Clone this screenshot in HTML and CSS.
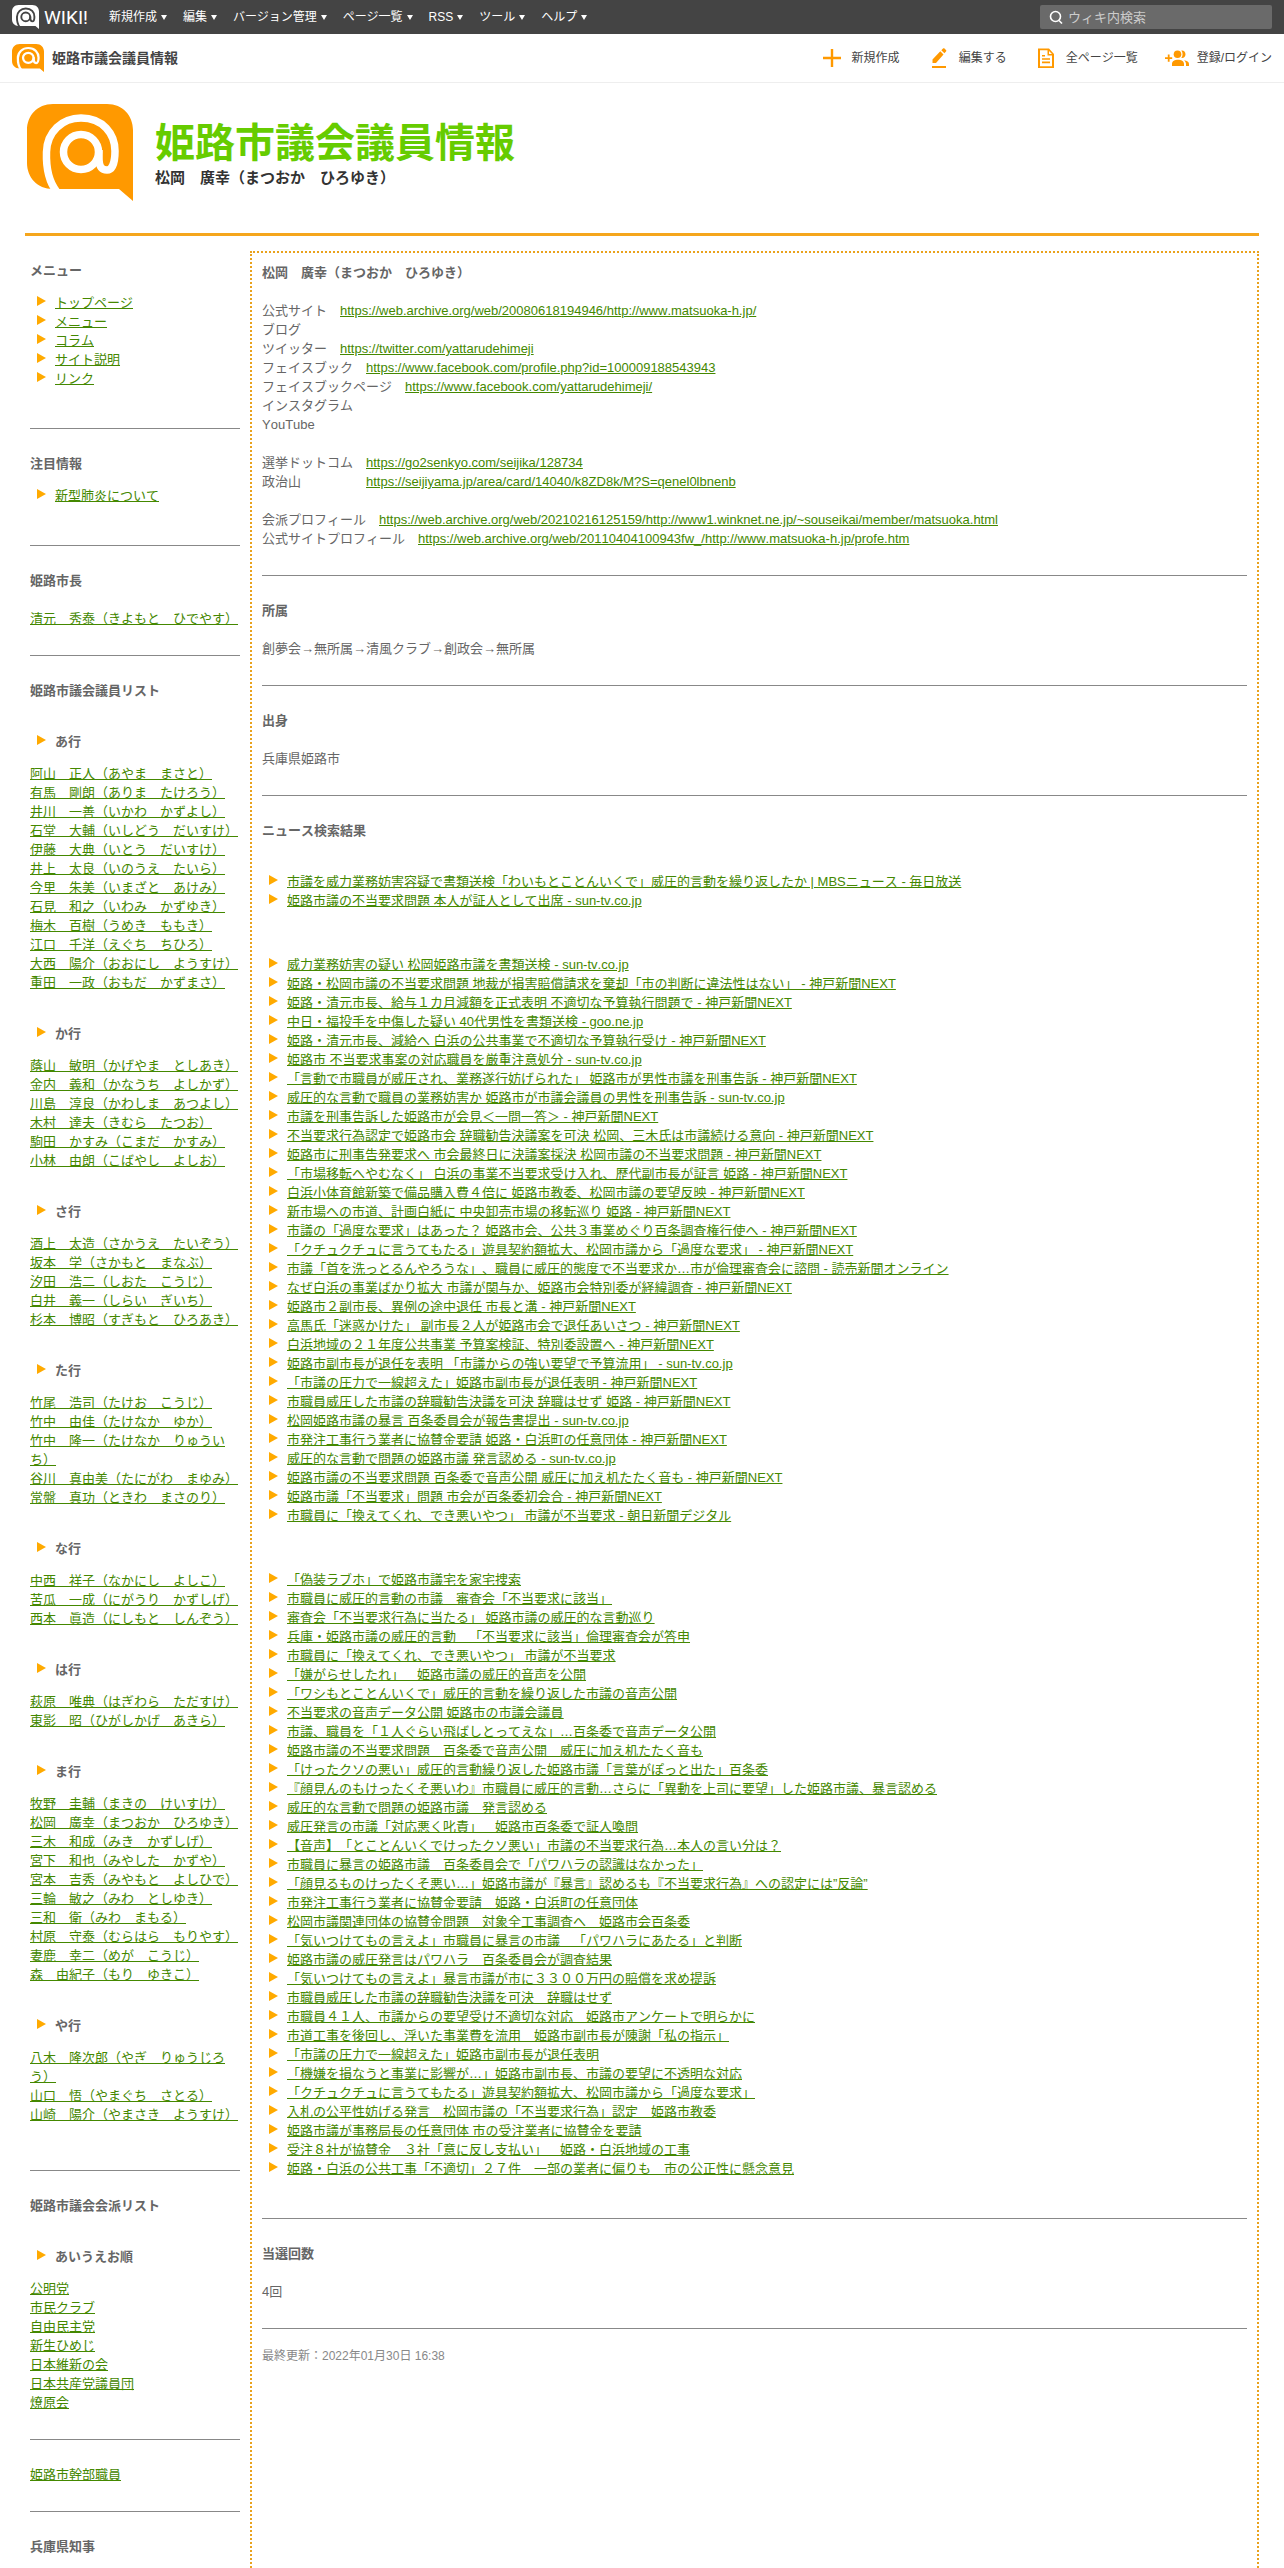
FILE: index.html
```html
<!DOCTYPE html>
<html lang="ja">
<head>
    <meta charset="UTF-8">
    <meta name="viewport" content="width=device-width, initial-scale=1.0">
    <title>松岡　廣幸（まつおか　ひろゆき） - 姫路市議会議員情報</title>
    <link rel="stylesheet" href="styles.css">
</head>
<body>
    <!-- shared logo mark -->
    <svg class="defs" width="0" height="0" aria-hidden="true">
        <symbol id="mark" viewBox="0 0 106 97" preserveAspectRatio="none">
            <path fill="currentColor" d="M26 0H80C96 0 106 12 106 26V97L92 85H26C10 85 0 73 0 59V26C0 12 10 0 26 0Z"/>
            <g fill="none" stroke="var(--line)" stroke-width="7.5">
                <path d="M30 88C21 77 19 64 19.500 48C20 28 35 14 54 14C76 14 88 30 88 47C88 59 85 66 80 66C74 66 72 62 72 54V46"/>
                <circle cx="54" cy="48" r="17.500"/>
            </g>
        </symbol>
    </svg>

    <div class="topbar">
        <a class="brand" href="#"><svg class="brand-mark"><use href="#mark"/></svg><span>WIKI!</span></a>
        <nav class="menu">
            <button type="button">新規作成</button>
            <button type="button">編集</button>
            <button type="button">バージョン管理</button>
            <button type="button">ページ一覧</button>
            <button type="button">RSS</button>
            <button type="button">ツール</button>
            <button type="button">ヘルプ</button>
        </nav>
        <form class="search">
            <svg viewBox="0 0 14 14" width="14" height="14" fill="none" stroke="#fff" stroke-width="1.6"><circle cx="6.500" cy="6.500" r="5"/><path d="M10 10.500l3 3"/></svg>
            <input type="search" aria-label="ウィキ内検索" placeholder="ウィキ内検索">
        </form>
    </div>

    <div class="wikibar">
        <a class="wiki-name" href="#"><svg class="wiki-mark"><use href="#mark"/></svg>姫路市議会議員情報</a>
        <nav class="actions">
            <a href="#"><svg viewBox="0 0 24 24"><path d="M10.800 3h2.400v7.800H21v2.400h-7.800V21h-2.400v-7.800H3v-2.400h7.800z"/></svg>新規作成</a>
            <a href="#"><svg viewBox="0 0 24 24"><path d="M5 20h14v2H5zM5.500 17v-3.500l7.800-8.200 3.200 3.200L9 17zM14.300 4.300l1.700-1.800c.5-.5 1-.5 1.500 0l1.500 1.500c.5.5.5 1 0 1.500l-1.600 1.800z"/></svg>編集する</a>
            <a href="#"><svg viewBox="0 0 24 24"><path fill-rule="evenodd" d="M4 2.500h11l5 5.500v14H4zM6 4.300v15.900h12V9.500h-4.500V4.300zM15 5v3h3zM8 9h3v1.600H8zM8 12.200h8v1.600H8zM8 15.600h8v1.600H8z"/></svg>全ページ一覧</a>
            <a href="#"><svg viewBox="0 0 24 24"><path d="M2.800 8.500h1.800v2.700h2.600V13H4.600v2.700H2.800V13H0v-1.800h2.800zM7 20v-2c0-3 3-4.200 6-4.200s6 1.200 6 4.200v2z"/><circle cx="12.500" cy="8.300" r="3.800"/><path d="M16.300 4.600c2.200-.6 4.200 1.300 4.200 3.700s-2 4.300-4.200 3.700c1.700-2.200 1.700-5.200 0-7.400zM19 14.200c3 .4 5 1.600 5 3.800v2h-3v-2c0-1.600-.8-2.900-2-3.800z"/></svg>登録/ログイン</a>
        </nav>
    </div>

    <div class="container">
        <header class="header">
            <a href="#"><svg class="header-mark"><use href="#mark"/></svg></a>
            <div class="titles">
                <h1>姫路市議会議員情報</h1>
                <p>松岡　廣幸（まつおか　ひろゆき）</p>
            </div>
        </header>

        <div class="columns">
            <aside class="sidebar">
                <h2>メニュー</h2>
                <ul class="arrows">
                    <li><a href="#">トップページ</a></li>
                    <li><a href="#">メニュー</a></li>
                    <li><a href="#">コラム</a></li>
                    <li><a href="#">サイト説明</a></li>
                    <li><a href="#">リンク</a></li>
                </ul>
                <hr>
                <h2>注目情報</h2>
                <ul class="arrows">
                    <li><a href="#">新型肺炎について</a></li>
                </ul>
                <hr>
                <h2>姫路市長</h2>
                <p><a href="#">清元　秀泰（きよもと　ひでやす）</a></p>
                <hr>
                <h2>姫路市議会議員リスト</h2>
                <h3>あ行</h3>
                <ul>
                    <li><a href="#">阿山　正人（あやま　まさと）</a></li>
                    <li><a href="#">有馬　剛朗（ありま　たけろう）</a></li>
                    <li><a href="#">井川　一善（いかわ　かずよし）</a></li>
                    <li><a href="#">石堂　大輔（いしどう　だいすけ）</a></li>
                    <li><a href="#">伊藤　大典（いとう　だいすけ）</a></li>
                    <li><a href="#">井上　太良（いのうえ　たいら）</a></li>
                    <li><a href="#">今里　朱美（いまざと　あけみ）</a></li>
                    <li><a href="#">石見　和之（いわみ　かずゆき）</a></li>
                    <li><a href="#">梅木　百樹（うめき　ももき）</a></li>
                    <li><a href="#">江口　千洋（えぐち　ちひろ）</a></li>
                    <li><a href="#">大西　陽介（おおにし　ようすけ）</a></li>
                    <li><a href="#">重田　一政（おもだ　かずまさ）</a></li>
                </ul>
                <h3>か行</h3>
                <ul>
                    <li><a href="#">蔭山　敏明（かげやま　としあき）</a></li>
                    <li><a href="#">金内　義和（かなうち　よしかず）</a></li>
                    <li><a href="#">川島　淳良（かわしま　あつよし）</a></li>
                    <li><a href="#">木村　達夫（きむら　たつお）</a></li>
                    <li><a href="#">駒田　かすみ（こまだ　かすみ）</a></li>
                    <li><a href="#">小林　由朗（こばやし　よしお）</a></li>
                </ul>
                <h3>さ行</h3>
                <ul>
                    <li><a href="#">酒上　太造（さかうえ　たいぞう）</a></li>
                    <li><a href="#">坂本　学（さかもと　まなぶ）</a></li>
                    <li><a href="#">汐田　浩二（しおた　こうじ）</a></li>
                    <li><a href="#">白井　義一（しらい　ぎいち）</a></li>
                    <li><a href="#">杉本　博昭（すぎもと　ひろあき）</a></li>
                </ul>
                <h3>た行</h3>
                <ul>
                    <li><a href="#">竹尾　浩司（たけお　こうじ）</a></li>
                    <li><a href="#">竹中　由佳（たけなか　ゆか）</a></li>
                    <li><a href="#">竹中　隆一（たけなか　りゅういち）</a></li>
                    <li><a href="#">谷川　真由美（たにがわ　まゆみ）</a></li>
                    <li><a href="#">常盤　真功（ときわ　まさのり）</a></li>
                </ul>
                <h3>な行</h3>
                <ul>
                    <li><a href="#">中西　祥子（なかにし　よしこ）</a></li>
                    <li><a href="#">苦瓜　一成（にがうり　かずしげ）</a></li>
                    <li><a href="#">西本　眞造（にしもと　しんぞう）</a></li>
                </ul>
                <h3>は行</h3>
                <ul>
                    <li><a href="#">萩原　唯典（はぎわら　ただすけ）</a></li>
                    <li><a href="#">東影　昭（ひがしかげ　あきら）</a></li>
                </ul>
                <h3>ま行</h3>
                <ul>
                    <li><a href="#">牧野　圭輔（まきの　けいすけ）</a></li>
                    <li><a href="#">松岡　廣幸（まつおか　ひろゆき）</a></li>
                    <li><a href="#">三木　和成（みき　かずしげ）</a></li>
                    <li><a href="#">宮下　和也（みやした　かずや）</a></li>
                    <li><a href="#">宮本　吉秀（みやもと　よしひで）</a></li>
                    <li><a href="#">三輪　敏之（みわ　としゆき）</a></li>
                    <li><a href="#">三和　衛（みわ　まもる）</a></li>
                    <li><a href="#">村原　守泰（むらはら　もりやす）</a></li>
                    <li><a href="#">妻鹿　幸二（めが　こうじ）</a></li>
                    <li><a href="#">森　由紀子（もり　ゆきこ）</a></li>
                </ul>
                <h3>や行</h3>
                <ul class="last">
                    <li><a href="#">八木　隆次郎（やぎ　りゅうじろう）</a></li>
                    <li><a href="#">山口　悟（やまぐち　さとる）</a></li>
                    <li><a href="#">山崎　陽介（やまさき　ようすけ）</a></li>
                </ul>
                <hr>
                <h2>姫路市議会会派リスト</h2>
                <h3>あいうえお順</h3>
                <ul>
                    <li><a href="#">公明党</a></li>
                    <li><a href="#">市民クラブ</a></li>
                    <li><a href="#">自由民主党</a></li>
                    <li><a href="#">新生ひめじ</a></li>
                    <li><a href="#">日本維新の会</a></li>
                    <li><a href="#">日本共産党議員団</a></li>
                    <li><a href="#">燎原会</a></li>
                </ul>
                <hr>
                <a href="#">姫路市幹部職員</a>
                <hr>
                <h2>兵庫県知事</h2>
            </aside>

            <main class="content">
                <h2>松岡　廣幸（まつおか　ひろゆき）</h2>
                <p>
                    公式サイト　<a href="#">https://web.archive.org/web/20080618194946/http://www.matsuoka-h.jp/</a><br>
                    ブログ<br>
                    ツイッター　<a href="#">https://twitter.com/yattarudehimeji</a><br>
                    フェイスブック　<a href="#">https://www.facebook.com/profile.php?id=100009188543943</a><br>
                    フェイスブックページ　<a href="#">https://www.facebook.com/yattarudehimeji/</a><br>
                    インスタグラム<br>
                    YouTube
                </p>
                <p>
                    選挙ドットコム　<a href="#">https://go2senkyo.com/seijika/128734</a><br>
                    政治山　　　　　<a href="#">https://seijiyama.jp/area/card/14040/k8ZD8k/M?S=qenel0lbnenb</a>
                </p>
                <p>
                    会派プロフィール　<a href="#">https://web.archive.org/web/20210216125159/http://www1.winknet.ne.jp/~souseikai/member/matsuoka.html</a><br>
                    公式サイトプロフィール　<a href="#">https://web.archive.org/web/20110404100943fw_/http://www.matsuoka-h.jp/profe.htm</a>
                </p>
                <hr>
                <h2>所属</h2>
                <p>創夢会→無所属→清風クラブ→創政会→無所属</p>
                <hr>
                <h2>出身</h2>
                <p>兵庫県姫路市</p>
                <hr>
                <h2>ニュース検索結果</h2>
                <ul class="arrows news">
                    <li><a href="#">市議を威力業務妨害容疑で書類送検「わいもとことんいくで」威圧的言動を繰り返したか | MBSニュース - 毎日放送</a></li>
                    <li><a href="#">姫路市議の不当要求問題 本人が証人として出席 - sun-tv.co.jp</a></li>
                </ul>
                <ul class="arrows news">
                    <li><a href="#">威力業務妨害の疑い 松岡姫路市議を書類送検 - sun-tv.co.jp</a></li>
                    <li><a href="#">姫路・松岡市議の不当要求問題 地裁が損害賠償請求を棄却「市の判断に違法性はない」 - 神戸新聞NEXT</a></li>
                    <li><a href="#">姫路・清元市長、給与１カ月減額を正式表明 不適切な予算執行問題で - 神戸新聞NEXT</a></li>
                    <li><a href="#">中日・福投手を中傷した疑い 40代男性を書類送検 - goo.ne.jp</a></li>
                    <li><a href="#">姫路・清元市長、減給へ 白浜の公共事業で不適切な予算執行受け - 神戸新聞NEXT</a></li>
                    <li><a href="#">姫路市 不当要求事案の対応職員を厳重注意処分 - sun-tv.co.jp</a></li>
                    <li><a href="#">「言動で市職員が威圧され、業務遂行妨げられた」 姫路市が男性市議を刑事告訴 - 神戸新聞NEXT</a></li>
                    <li><a href="#">威圧的な言動で職員の業務妨害か 姫路市が市議会議員の男性を刑事告訴 - sun-tv.co.jp</a></li>
                    <li><a href="#">市議を刑事告訴した姫路市が会見＜一問一答＞ - 神戸新聞NEXT</a></li>
                    <li><a href="#">不当要求行為認定で姫路市会 辞職勧告決議案を可決 松岡、三木氏は市議続ける意向 - 神戸新聞NEXT</a></li>
                    <li><a href="#">姫路市に刑事告発要求へ 市会最終日に決議案採決 松岡市議の不当要求問題 - 神戸新聞NEXT</a></li>
                    <li><a href="#">「市場移転へやむなく」 白浜の事業不当要求受け入れ、歴代副市長が証言 姫路 - 神戸新聞NEXT</a></li>
                    <li><a href="#">白浜小体育館新築で備品購入費４倍に 姫路市教委、松岡市議の要望反映 - 神戸新聞NEXT</a></li>
                    <li><a href="#">新市場への市道、計画白紙に 中央卸売市場の移転巡り 姫路 - 神戸新聞NEXT</a></li>
                    <li><a href="#">市議の「過度な要求」はあった？ 姫路市会、公共３事業めぐり百条調査権行使へ - 神戸新聞NEXT</a></li>
                    <li><a href="#">「クチュクチュに言うてもたる」遊具契約額拡大、松岡市議から「過度な要求」 - 神戸新聞NEXT</a></li>
                    <li><a href="#">市議「首を洗っとるんやろうな」、職員に威圧的態度で不当要求か…市が倫理審査会に諮問 - 読売新聞オンライン</a></li>
                    <li><a href="#">なぜ白浜の事業ばかり拡大 市議が関与か、姫路市会特別委が経緯調査 - 神戸新聞NEXT</a></li>
                    <li><a href="#">姫路市２副市長、異例の途中退任 市長と溝 - 神戸新聞NEXT</a></li>
                    <li><a href="#">高馬氏「迷惑かけた」 副市長２人が姫路市会で退任あいさつ - 神戸新聞NEXT</a></li>
                    <li><a href="#">白浜地域の２１年度公共事業 予算案検証、特別委設置へ - 神戸新聞NEXT</a></li>
                    <li><a href="#">姫路市副市長が退任を表明 「市議からの強い要望で予算流用」 - sun-tv.co.jp</a></li>
                    <li><a href="#">「市議の圧力で一線超えた」姫路市副市長が退任表明 - 神戸新聞NEXT</a></li>
                    <li><a href="#">市職員威圧した市議の辞職勧告決議を可決 辞職はせず 姫路 - 神戸新聞NEXT</a></li>
                    <li><a href="#">松岡姫路市議の暴言 百条委員会が報告書提出 - sun-tv.co.jp</a></li>
                    <li><a href="#">市発注工事行う業者に協賛金要請 姫路・白浜町の任意団体 - 神戸新聞NEXT</a></li>
                    <li><a href="#">威圧的な言動で問題の姫路市議 発言認める - sun-tv.co.jp</a></li>
                    <li><a href="#">姫路市議の不当要求問題 百条委で音声公開 威圧に加え机たたく音も - 神戸新聞NEXT</a></li>
                    <li><a href="#">姫路市議「不当要求」問題 市会が百条委初会合 - 神戸新聞NEXT</a></li>
                    <li><a href="#">市職員に「換えてくれ、でき悪いやつ」 市議が不当要求 - 朝日新聞デジタル</a></li>
                </ul>
                <ul class="arrows news">
                    <li><a href="#">「偽装ラブホ」で姫路市議宅を家宅捜索</a></li>
                    <li><a href="#">市職員に威圧的言動の市議　審査会「不当要求に該当」</a></li>
                    <li><a href="#">審査会「不当要求行為に当たる」 姫路市議の威圧的な言動巡り</a></li>
                    <li><a href="#">兵庫・姫路市議の威圧的言動　「不当要求に該当」倫理審査会が答申</a></li>
                    <li><a href="#">市職員に「換えてくれ、でき悪いやつ」 市議が不当要求</a></li>
                    <li><a href="#">「嫌がらせしたれ」　姫路市議の威圧的音声を公開</a></li>
                    <li><a href="#">「ワシもとことんいくで」威圧的言動を繰り返した市議の音声公開</a></li>
                    <li><a href="#">不当要求の音声データ公開 姫路市の市議会議員</a></li>
                    <li><a href="#">市議、職員を「１人ぐらい飛ばしとってえな」…百条委で音声データ公開</a></li>
                    <li><a href="#">姫路市議の不当要求問題　百条委で音声公開　威圧に加え机たたく音も</a></li>
                    <li><a href="#">「けったクソの悪い」威圧的言動繰り返した姫路市議「言葉がぽっと出た」百条委</a></li>
                    <li><a href="#">『顔見んのもけったくそ悪いわ』市職員に威圧的言動…さらに「異動を上司に要望」した姫路市議、暴言認める</a></li>
                    <li><a href="#">威圧的な言動で問題の姫路市議　発言認める</a></li>
                    <li><a href="#">威圧発言の市議「対応悪く叱責」　姫路市百条委で証人喚問</a></li>
                    <li><a href="#">【音声】「とことんいくでけったクソ悪い」市議の不当要求行為…本人の言い分は？</a></li>
                    <li><a href="#">市職員に暴言の姫路市議　百条委員会で「パワハラの認識はなかった」</a></li>
                    <li><a href="#">「顔見るものけったくそ悪い…」姫路市議が『暴言』認めるも『不当要求行為』への認定には”反論”</a></li>
                    <li><a href="#">市発注工事行う業者に協賛金要請　姫路・白浜町の任意団体</a></li>
                    <li><a href="#">松岡市議関連団体の協賛金問題　対象全工事調査へ　姫路市会百条委</a></li>
                    <li><a href="#">「気いつけてもの言えよ」市職員に暴言の市議　「パワハラにあたる」と判断</a></li>
                    <li><a href="#">姫路市議の威圧発言はパワハラ　百条委員会が調査結果</a></li>
                    <li><a href="#">「気いつけてもの言えよ」暴言市議が市に３３００万円の賠償を求め提訴</a></li>
                    <li><a href="#">市職員威圧した市議の辞職勧告決議を可決　辞職はせず</a></li>
                    <li><a href="#">市職員４１人、市議からの要望受け不適切な対応　姫路市アンケートで明らかに</a></li>
                    <li><a href="#">市道工事を後回し、浮いた事業費を流用　姫路市副市長が陳謝「私の指示」</a></li>
                    <li><a href="#">「市議の圧力で一線超えた」姫路市副市長が退任表明</a></li>
                    <li><a href="#">「機嫌を損なうと事業に影響が…」姫路市副市長、市議の要望に不透明な対応</a></li>
                    <li><a href="#">「クチュクチュに言うてもたる」遊具契約額拡大、松岡市議から「過度な要求」</a></li>
                    <li><a href="#">入札の公平性妨げる発言　松岡市議の「不当要求行為」認定　姫路市教委</a></li>
                    <li><a href="#">姫路市議が事務局長の任意団体 市の受注業者に協賛金を要請</a></li>
                    <li><a href="#">受注８社が協賛金　３社「意に反し支払い」　姫路・白浜地域の工事</a></li>
                    <li><a href="#">姫路・白浜の公共工事「不適切」２７件　一部の業者に偏りも　市の公正性に懸念意見</a></li>
                </ul>
                <hr>
                <h2>当選回数</h2>
                <p>4回</p>
                <hr class="end">
                <div class="updated">最終更新：2022年01月30日 16:38</div>
            </main>
        </div>
    </div>
</body>
</html>
```
FILE: styles.css
```css
* {
    margin: 0;
    padding: 0;
    box-sizing: border-box;
}

body {
    font-family: "Liberation Sans", Arial, "Noto Sans CJK JP", sans-serif;
    font-size: 13px;
    line-height: 19px;
    font-kerning: none;
    text-spacing-trim: space-all;
    background-color: #fff;
    color: #666;
}

a {
    color: #480;
}

ul {
    list-style: none;
}

.defs {
    position: absolute;
}

/* dark menu bar */
.topbar {
    display: flex;
    align-items: center;
    height: 34px;
    padding: 0 12px;
    background: #444;
}

.brand {
    display: flex;
    align-items: center;
    gap: 5px;
    margin-right: 21px;
    color: #fff;
    font-family: Roboto, sans-serif;
    font-size: 19px;
    text-decoration: none;
}

.brand-mark {
    width: 27px;
    height: 24px;
    --line: #444;
}

.menu {
    display: flex;
    gap: 16px;
}

.menu button {
    display: flex;
    align-items: center;
    gap: 4px;
    border: 0;
    background: none;
    color: #fff;
    font-family: inherit;
    font-size: 12px;
    line-height: 19px;
    cursor: pointer;
}

.menu button::after {
    content: "";
    border: 3px solid transparent;
    border-top: 5px solid #fff;
    border-bottom: 0;
}

.search {
    display: flex;
    align-items: center;
    gap: 5px;
    width: 232px;
    height: 24px;
    margin-left: auto;
    padding: 0 9px;
    border-radius: 2px;
    background: #6a6a6a;
}

.search input {
    flex: 1;
    min-width: 0;
    border: 0;
    outline: 0;
    background: none;
    color: #fff;
    font-family: inherit;
    font-size: 13px;
}

.search input::placeholder {
    color: #ccc;
}

/* wiki name and actions */
.wikibar {
    display: flex;
    align-items: center;
    justify-content: space-between;
    height: 49px;
    padding: 0 12px;
    border-bottom: 1px solid #eee;
}

.wikibar a {
    display: flex;
    align-items: center;
    color: #444;
    text-decoration: none;
}

.wikibar .wiki-name {
    gap: 8px;
    font-size: 14px;
    font-weight: bold;
}

.wiki-mark {
    width: 32px;
    height: 28px;
    color: #f90;
    --line: #fff;
}

.actions {
    display: flex;
    gap: 27px;
    font-size: 12px;
}

.actions a {
    gap: 8px;
}

.actions svg {
    width: 24px;
    height: 24px;
    fill: #f90;
}

/* page header */
.container {
    margin: 0 25px;
}

.header {
    display: flex;
    gap: 22px;
    padding: 21px 2px 32px;
    border-bottom: 3px solid #f5a61d;
}

.header-mark {
    display: block;
    width: 106px;
    height: 97px;
    color: #f90;
    --line: #fff;
}

.titles {
    padding-top: 17px;
}

h1 {
    font-size: 40px;
    line-height: 44px;
    color: #6c0;
}

.titles p {
    margin-top: 3px;
    font-size: 15px;
    line-height: 20px;
    font-weight: bold;
    color: #333;
}

/* columns */
.columns {
    display: grid;
    grid-template-columns: 225px 1fr;
    margin-top: 15px;
}

.sidebar {
    padding: 10px 10px 12px 5px;
}

.content {
    padding: 10px;
    border: 2px dotted #e9a21d;
    border-bottom: 0;
}

h2 {
    font-size: 13px;
    line-height: 19px;
}

.columns p {
    margin-top: 19px;
}

hr {
    height: 1px;
    margin: 27px 0 25px;
    border: 0;
    background: #888;
}

hr.end {
    margin-bottom: 18px;
}

h3 {
    margin: 32px 0 13px;
    font-size: 13px;
    line-height: 19px;
}

.arrows {
    padding: 13px 0;
}

.arrows li, h3 {
    display: flex;
    padding-left: 7px;
}

/* orange arrow in front of list items */
.arrows li::before, h3::before {
    content: "";
    flex: none;
    height: 0;
    margin: 3px 9px 0 0;
    border: 5px solid transparent;
    border-left: 9px solid #fa0;
    border-right: 0;
}

.news {
    margin-top: 19px;
}

.last {
    padding-bottom: 19px;
}

.updated {
    font-size: 12px;
    color: #888;
}
```
